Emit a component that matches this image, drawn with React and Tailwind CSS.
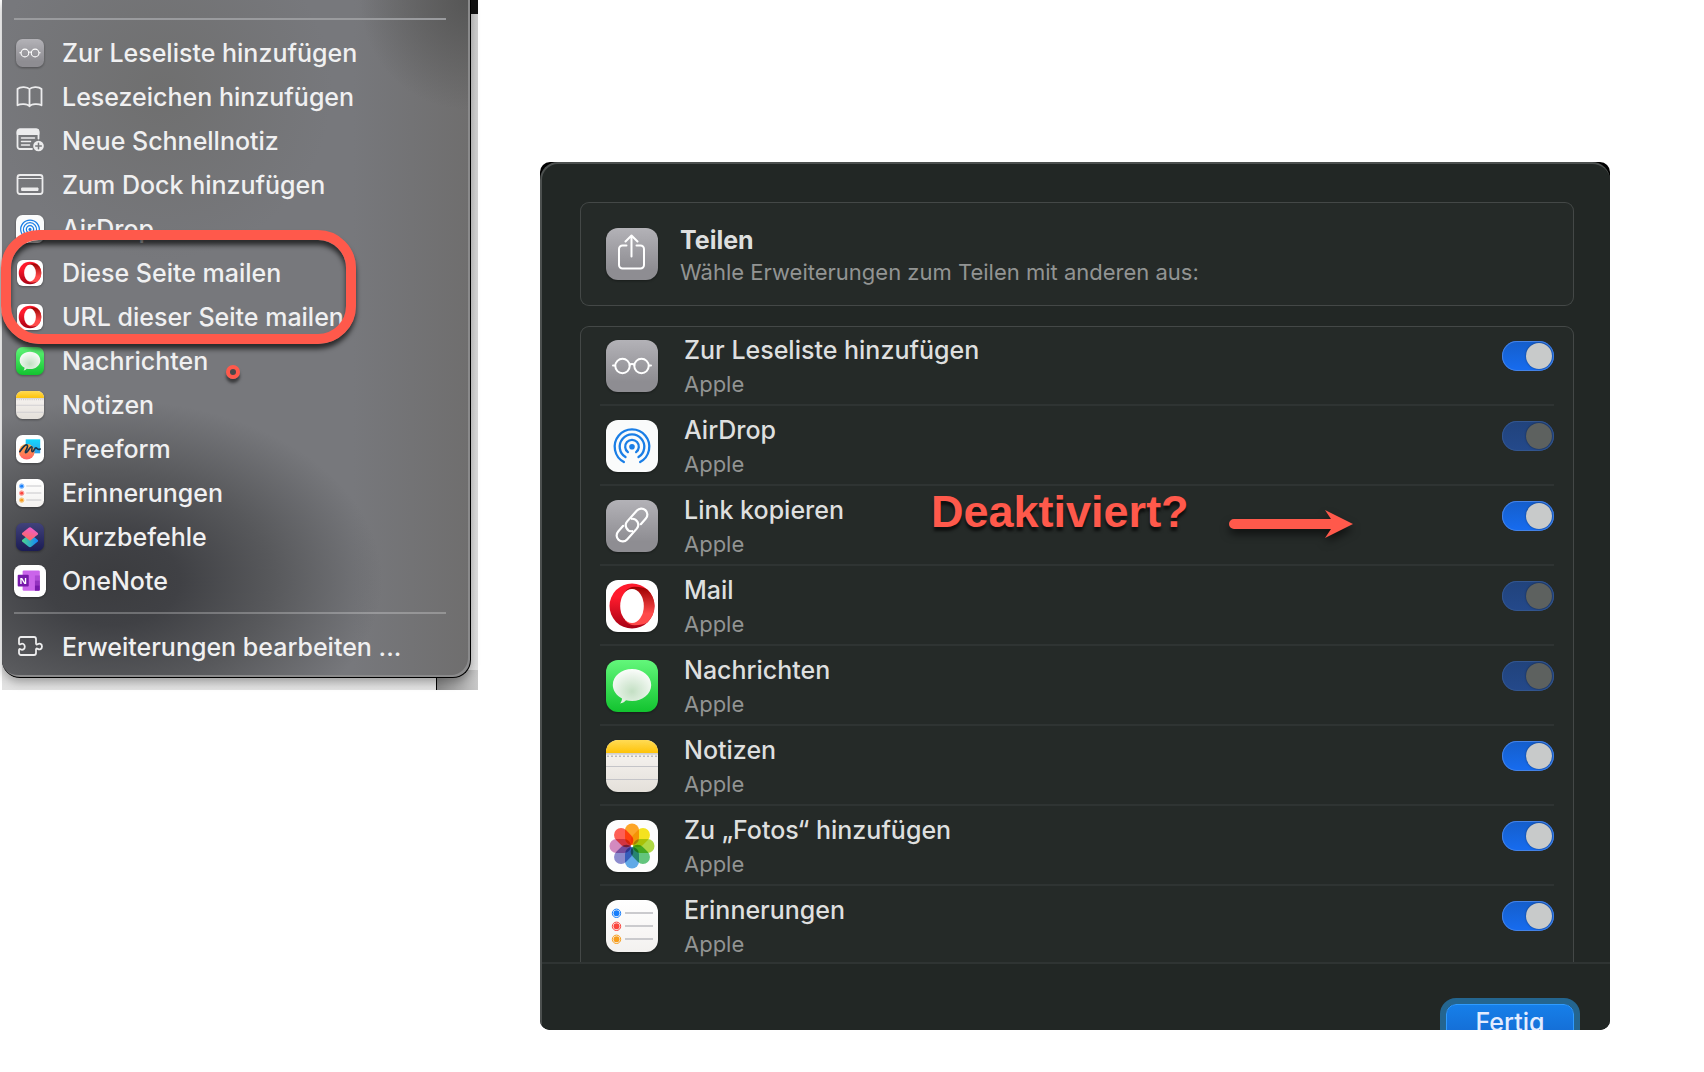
import React from 'react';

const Gradients = () => (
  <svg className="absolute w-0 h-0" aria-hidden="true">
    <defs>
      <linearGradient id="grey" x2="0" y2="1"><stop stopColor="#b3b2b7" /><stop offset=".8" stopColor="#8e8d92" /></linearGradient>
      <linearGradient id="paper" x2="0" y2="1"><stop stopColor="#ffffff" /><stop offset="1" stopColor="#f3f1ef" /></linearGradient>
      <linearGradient id="green" x2="0" y2="1"><stop stopColor="#63f77b" /><stop offset="1" stopColor="#12c32f" /></linearGradient>
      <linearGradient id="night" x2="0" y2="1"><stop stopColor="#41427a" /><stop offset="1" stopColor="#1b1c55" /></linearGradient>
      <linearGradient id="noteTop" x2="0" y2="1"><stop stopColor="#ffdb55" /><stop offset="1" stopColor="#fec309" /></linearGradient>
      <linearGradient id="notePaper" x2="0" y2="1"><stop stopColor="#fbf8f6" /><stop offset="1" stopColor="#e4e0da" /></linearGradient>
      <linearGradient id="operaRed" x2="0" y2="1"><stop offset=".3" stopColor="#ff1b2d" /><stop offset="1" stopColor="#a70014" /></linearGradient>
      <linearGradient id="operaDark" x2="0" y2="1"><stop stopColor="#9c0000" /><stop offset=".7" stopColor="#ff4b4b" /></linearGradient>
      <radialGradient id="bubble" cx=".5" cy=".65" r=".7"><stop stopColor="#c3dfc3" /><stop offset="1" stopColor="#ffffff" /></radialGradient>
      <linearGradient id="coral" x2="0" y2="1"><stop stopColor="#ffb03a" /><stop offset="1" stopColor="#ff5f66" /></linearGradient>
      <linearGradient id="cyan" x2="0" y2="1"><stop stopColor="#14d8ff" /><stop offset="1" stopColor="#2f9fe8" /></linearGradient>
      <linearGradient id="pink" x1=".7" y1="0" x2=".3" y2="1"><stop stopColor="#ee5bd0" /><stop offset="1" stopColor="#ff6a55" /></linearGradient>
      <linearGradient id="teal" x2="1" y2="0"><stop stopColor="#4fd68b" /><stop offset="1" stopColor="#1184ff" /></linearGradient>
      <clipPath id="tile"><rect width="52" height="52" rx="12" /></clipPath>
    </defs>
  </svg>
);

const Tile = ({ fill, size = 'w-7 h-7', children }) => (
  <svg viewBox="0 0 52 52" className={`${size} shrink-0 drop-shadow-[0_1px_1px_rgba(0,0,0,0.35)]`} fill="none" aria-hidden="true">
    <rect width="52" height="52" rx="12" fill={fill} />
    {children}
  </svg>
);

const Share = ({ size }) => (
  <Tile fill="url(#grey)" size={size}>
    <path d="M20.5 17.5h-4a3.5 3.5 0 0 0-3.5 3.5v16a3.5 3.5 0 0 0 3.5 3.5h18a3.5 3.5 0 0 0 3.5-3.5V21a3.5 3.5 0 0 0-3.5-3.5h-4M25.5 28.500V8M19.500 13.500l6-6 6 6" stroke="#fff" strokeWidth="2" strokeLinecap="round" strokeLinejoin="round" />
  </Tile>
);

const Glasses = ({ size }) => (
  <Tile fill="url(#grey)" size={size}>
    <g stroke="#fff" strokeWidth="2" strokeLinecap="round">
      <circle cx="16.500" cy="26" r="7.200" />
      <circle cx="35.500" cy="26" r="7.200" />
      <path d="M23.500 25c1-1.200 4-1.200 5 0M7 25.500h2M43 25.500h2" />
    </g>
  </Tile>
);

const AirDrop = ({ size }) => (
  <Tile fill="#fafbfb" size={size}>
    <g stroke="#1a7ee6" strokeWidth="2.300" strokeLinecap="round">
      <path d="M17.900 42A17.300 17.300 0 1 1 34.100 42" />
      <path d="M19.500 37.100A12.300 12.300 0 1 1 32.500 37.100" />
      <path d="M21.900 32.100A6.800 6.800 0 1 1 30.100 32.100" />
    </g>
    <circle cx="26" cy="26.700" r="2.800" fill="#1a7ee6" />
  </Tile>
);

const Chain = ({ size }) => (
  <Tile fill="url(#grey)" size={size}>
    <g stroke="#fff" strokeWidth="2.200" strokeLinecap="round" transform="rotate(-48 26 25)">
      <path d="M19.500 19H12a6 6 0 0 0 0 12h14.500a6 6 0 0 0 4-10.300" />
      <path d="M32.500 31H40a6 6 0 0 0 0-12H25.500a6 6 0 0 0-4 10.300" />
    </g>
  </Tile>
);

const Opera = ({ size }) => (
  <Tile fill="#fff" size={size}>
    <circle cx="26" cy="26" r="22.500" fill="url(#operaRed)" />
    <path d="M19 11.800c2.500-3.300 6-5 9.600-5 5.400 0 9.900 1 12.400 2.400a22.500 22.500 0 0 1 0 33.600c-2.500 1.400-7 2.400-12.400 2.400-3.600 0-7.100-1.700-9.600-5z" fill="url(#operaDark)" />
    <ellipse cx="26" cy="26" rx="11.800" ry="17" fill="#fff" />
  </Tile>
);

const Messages = ({ size }) => (
  <Tile fill="url(#green)" size={size}>
    <path d="M26 9c10.700 0 19.200 7.200 19.200 16S36.700 41 26 41c-2.100 0-4.100-.3-6-.8-1.600 1.700-3.600 2.900-6 3.300 1.200-1.400 1.900-3 2-5C10.600 35.700 6.800 30.700 6.800 25 6.800 16.200 15.300 9 26 9z" fill="url(#bubble)" />
  </Tile>
);

const Notes = ({ size }) => (
  <Tile fill="url(#notePaper)" size={size}>
    <g clipPath="url(#tile)">
      <path d="M0 0h52v13H0z" fill="url(#noteTop)" />
      <path d="M0 13.800h52M0 26.500h52M0 39.500h52" stroke="#c4c4c8" strokeWidth="1.200" />
      <path d="M1 16.200h52" stroke="#b9b9bb" strokeWidth="1.500" strokeDasharray="2 2" />
    </g>
  </Tile>
);

const petals = ['#ff9a0a', '#f5e000', '#a5d52a', '#4fbf6c', '#4b9fe6', '#7d7cc8', '#cf7bb8', '#ff4a3d'];

const Photos = ({ size }) => (
  <Tile fill="#fdfdfd" size={size}>
    {petals.map((color, i) => (
      <rect key={color} x="19" y="3.500" width="14" height="21.500" rx="7" fill={color} fillOpacity=".88" transform={`rotate(${i * 45} 26 26)`} className="mix-blend-multiply" />
    ))}
    <circle cx="26" cy="26" r="1" fill="#fff" />
  </Tile>
);

const Reminders = ({ size }) => (
  <Tile fill="url(#paper)" size={size}>
    {['#167efb', '#fb453d', '#f79d1b'].map((color, i) => (
      <g key={color} transform={`translate(0 ${i * 13})`}>
        <circle cx="10.500" cy="13.300" r="3" fill={color} />
        <circle cx="10.500" cy="13.300" r="4.200" stroke={color} strokeWidth="1" />
        <path d="M19 13h28" stroke="#bfbfc3" strokeWidth="1.600" />
      </g>
    ))}
  </Tile>
);

const Freeform = () => (
  <Tile fill="#fff">
    <path d="M18 8h27v26H18z" fill="url(#cyan)" />
    <circle cx="20" cy="31" r="14.500" fill="url(#coral)" />
    <path d="M7 31c4-6 11-15 14-12s-6 13-3 14 8-12 11-11-2 8 1 9 4-7 7-7 3 5 8 2" stroke="#14344f" strokeWidth="3" strokeLinecap="round" />
  </Tile>
);

const Shortcuts = () => (
  <Tile fill="url(#night)">
    <path d="M26 45c-1 0-2-.4-3-1.200L12 35c-1.300-1.200-1.300-2.800 0-4l14-11 14 11c1.300 1.200 1.300 2.800 0 4l-11 8.800c-1 .8-2 1.200-3 1.200z" fill="url(#teal)" />
    <path d="M26 8c-1 0-2 .4-3 1.200L12 18c-1.300 1.200-1.300 2.800 0 4l14 11 14-11c1.300-1.200 1.300-2.800 0-4L29 9.200C28 8.400 27 8 26 8z" fill="url(#pink)" />
  </Tile>
);

const OneNote = () => (
  <Tile fill="#fff" size="w-8 h-8">
    <rect x="14" y="9" width="28" height="33" rx="2" fill="#ca64ea" />
    <path d="M34 17h8v8h-8z" fill="#ae4bd5" />
    <path d="M34 25h8v8h-8z" fill="#9332bf" />
    <path d="M34 33h8v7a2 2 0 0 1-2 2h-6z" fill="#7719aa" />
    <rect x="6" y="16" width="18" height="19" rx="1.500" fill="#7719aa" />
    <text x="15" y="31" textAnchor="middle" fill="#fff" className="font-['Open_Sans',sans-serif] text-[15px] font-bold">N</text>
  </Tile>
);

const Line = ({ children }) => (
  <svg viewBox="0 0 28 28" className="w-7 h-7 shrink-0" fill="none" stroke="#ececed" strokeWidth="1.800" strokeLinecap="round" strokeLinejoin="round" aria-hidden="true">{children}</svg>
);

const Book = () => (
  <Line>
    <path d="M13.500 6C11.500 3.800 4.500 3 1.500 6v16.300c3-1.600 10-1.600 12 1 2-2.600 9-2.600 12-1V6c-3-3-10-2.200-12 0zM13.500 6v17" />
  </Line>
);

const QuickNote = () => (
  <Line>
    <path d="M16 22H4a2.500 2.500 0 0 1-2.500-2.500V5A2.500 2.500 0 0 1 4 2.500h16A2.500 2.500 0 0 1 22.500 5v6.500" />
    <path d="M1.500 7V5A2.500 2.500 0 0 1 4 2.500h16A2.500 2.500 0 0 1 22.500 5v2z" fill="#ececed" />
    <path d="M5.500 11h13M5.500 14.500h9M5.500 18h8" strokeWidth="1.500" />
    <circle cx="22.500" cy="19" r="5.300" fill="#ececed" stroke="none" />
    <path d="M22.500 16.200v5.600M19.700 19h5.600" stroke="#77787b" strokeWidth="1.500" />
  </Line>
);

const Dock = () => (
  <Line>
    <rect x="1.500" y="4" width="25" height="19" rx="2.500" />
    <path d="M2 7.500h24" strokeWidth="1.200" />
    <path d="M6 17h16v2.500H6z" fill="#ececed" strokeWidth="1" />
  </Line>
);

const Puzzle = () => (
  <Line>
    <path d="M5 4h13a2 2 0 0 1 2 2v4.500c0 1 .8 1.300 1.500.8 2-1.500 4.500-.3 4.500 2.200s-2.500 3.700-4.500 2.200c-.7-.5-1.500-.2-1.500.8V20a2 2 0 0 1-2 2H5a2 2 0 0 1-2-2v-3c0-1 .7-1.300 1.500-.8 2 1.300 4.300 0 4.300-2.500S6.500 9.900 4.500 11.200C3.700 11.700 3 11.500 3 10.500V6a2 2 0 0 1 2-2z" />
  </Line>
);

const menuItems = [
  { label: 'Zur Leseliste hinzufügen', icon: <Glasses /> },
  { label: 'Lesezeichen hinzufügen', icon: <Book /> },
  { label: 'Neue Schnellnotiz', icon: <QuickNote /> },
  { label: 'Zum Dock hinzufügen', icon: <Dock /> },
  { label: 'AirDrop', icon: <AirDrop /> },
  { label: 'Diese Seite mailen', icon: <Opera size="w-[26px] h-[26px]" /> },
  { label: 'URL dieser Seite mailen', icon: <Opera size="w-[26px] h-[26px]" /> },
  { label: 'Nachrichten', icon: <Messages /> },
  { label: 'Notizen', icon: <Notes /> },
  { label: 'Freeform', icon: <Freeform /> },
  { label: 'Erinnerungen', icon: <Reminders /> },
  { label: 'Kurzbefehle', icon: <Shortcuts /> },
  { label: 'OneNote', icon: <OneNote /> },
];

const extensions = [
  { id: 'leseliste', name: 'Zur Leseliste hinzufügen', Icon: Glasses },
  { id: 'airdrop', name: 'AirDrop', Icon: AirDrop, locked: true },
  { id: 'link', name: 'Link kopieren', Icon: Chain },
  { id: 'mail', name: 'Mail', Icon: Opera, locked: true },
  { id: 'nachrichten', name: 'Nachrichten', Icon: Messages, locked: true },
  { id: 'notizen', name: 'Notizen', Icon: Notes },
  { id: 'fotos', name: 'Zu „Fotos“ hinzufügen', Icon: Photos },
  { id: 'erinnerungen', name: 'Erinnerungen', Icon: Reminders },
];

const MenuItem = ({ icon, label }) => (
  <button type="button" className="flex items-center w-full h-11 pb-px pl-3 text-left text-[25px] leading-8 font-medium text-[#f0f0f1] whitespace-nowrap">
    <span className="w-8 flex justify-center shrink-0">{icon}</span>
    <span className="pl-4">{label}</span>
  </button>
);

const ShareMenu = () => (
  <div className="relative w-[476px] shrink-0 pb-3 bg-linear-to-b from-[#cfcfcf] to-[#e2e2e2]">
    <div className="absolute top-0 right-0 w-2 h-3.5 bg-[#111]"></div>
    <div className="absolute bottom-0 right-0 w-[42px] h-5 border-l border-black bg-linear-to-r from-[#8a8a8a] to-[#c8c8c8]"></div>
    <nav className="relative mr-[7px] pb-2 overflow-hidden rounded-b-[18px] border-r border-b border-black bg-[radial-gradient(ellipse_270px_180px_at_110px_580px,#3b3c3f_0%,#404145_25%,#58595c_60%,transparent_100%),radial-gradient(circle_at_100%_0%,#565656_0%,transparent_110px),radial-gradient(circle_at_160px_90px,#6f6f6f_0%,transparent_170px),linear-gradient(to_right,transparent_75%,#6f6e6e),linear-gradient(#77787c,#77787c)] shadow-[inset_-2px_-2px_0_#8a8a8b,0_4px_10px_rgba(0,0,0,0.3)]">
      <hr className="mt-[18px] mb-[11px] ml-3 mr-6 h-0.5 border-0 bg-[#9a9b9e]" />
      {menuItems.map(item => <MenuItem key={item.label} {...item} />)}
      <hr className="mt-[9px] mb-[11px] ml-3 mr-6 h-0.5 border-0 bg-white/25" />
      <MenuItem icon={<Puzzle />} label="Erweiterungen bearbeiten ..." />
    </nav>

    {/* red markers drawn over the menu */}
    <div className="absolute top-[230px] -left-px w-[355px] h-[114px] rounded-[38px] border-[10px] border-[#ff594b] shadow-[0_5px_5px_rgba(0,0,0,0.65),inset_0_5px_5px_rgba(0,0,0,0.65)]"></div>
    <div className="absolute top-[365px] left-[224px] w-3.5 h-3.5 rounded-full border-4 border-[#ff594b] bg-black/40 shadow-[0_4px_3px_rgba(0,0,0,0.5)]"></div>
  </div>
);

const Extension = ({ id, name, Icon, locked }) => (
  <li className="flex items-start h-20 pl-1.5 border-b-2 border-[#2f3433]">
    <div className="pt-3.5">
      <Icon size="w-[52px] h-[52px]" />
    </div>
    <label htmlFor={id} className="flex-1 pt-2 pl-[26px]">
      <span className="block text-[25px] leading-8 font-medium text-[#dedfdf]">{name}</span>
      <span className="block text-[22px] leading-9 text-[#929493]">Apple</span>
    </label>
    <input
      id={id}
      type="checkbox"
      defaultChecked
      disabled={locked}
      className="appearance-none flex items-center justify-end mt-[15px] w-[52px] h-[30px] px-0.5 rounded-full bg-linear-to-b from-[#155ecb] to-[#166cf0] ring-1 ring-inset ring-[#4583e6] before:w-[26px] before:h-[26px] before:rounded-full before:bg-[#c8caca] before:shadow-[0_0_2px_rgba(0,0,0,0.5)] disabled:from-[#21437c] disabled:to-[#24498b] disabled:ring-[#33568f] disabled:before:bg-[#5d615f]"
    />
  </li>
);

const ExtensionsDialog = () => (
  <section className="relative mt-[162px] flex-1 min-w-0 rounded-[10px] bg-black overflow-hidden" aria-label="Erweiterungen">
    <div className="rounded-t-[18px] border-t-2 border-l-2 border-[#4c504f] bg-[#222725]">
      <div className="pt-[38px] pl-[38px] pr-9">
        <header className="flex items-center h-[104px] pl-[26px] rounded-[9px] bg-[#252a28] ring-1 ring-inset ring-[#444847]">
          <Share size="w-[52px] h-[52px]" />
          <div className="pt-1 pl-[22px]">
            <h1 className="text-[25px] leading-8 font-bold text-[#dedfdf]">Teilen</h1>
            <p className="text-[22px] leading-8 text-[#929493]">Wähle Erweiterungen zum Teilen mit anderen aus:</p>
          </div>
        </header>
        <div className="mt-5 h-[636px] overflow-hidden">
          <ul className="px-5 pb-5 rounded-[9px] bg-[#252a28] ring-1 ring-inset ring-[#444847]">
            {extensions.map(ext => <Extension key={ext.id} {...ext} />)}
          </ul>
        </div>
      </div>
      <footer className="flex justify-end items-start h-[68px] pt-10 pr-9 overflow-hidden border-t-2 border-[#2f3433]">
        <button type="button" className="w-32 h-10 shrink-0 pb-1 rounded-[10px] border border-[#2f9bff] bg-linear-to-b from-[#167fe9] to-[#1468cf] ring-6 ring-[#24658f] text-[25px] leading-8 font-medium text-[#e3ecff]">Fertig</button>
      </footer>
    </div>

    {/* red annotation with its arrow */}
    <strong className="absolute top-[324px] left-[391px] font-['Liberation_Sans',sans-serif] text-[45px] leading-[52px] text-[#ff594b] [text-shadow:0_4px_3px_rgba(0,0,0,0.65)]">Deaktiviert?</strong>
    <svg viewBox="0 0 130 40" className="absolute top-[342px] left-[686px] w-[130px] h-10 overflow-visible drop-shadow-[0_5px_4px_rgba(0,0,0,0.6)]" aria-hidden="true">
      <path d="M8 15h97l-6-9 28 14-28 14 6-9H8a5 5 0 0 1 0-10z" fill="#ff594b" />
    </svg>
  </section>
);

export default function App() {
  return (
    <main className="flex items-start gap-[62px] min-h-screen pl-0.5 pr-[94px] bg-white font-['Inter',sans-serif]">
      <Gradients />
      <ShareMenu />
      <ExtensionsDialog />
    </main>
  );
}
